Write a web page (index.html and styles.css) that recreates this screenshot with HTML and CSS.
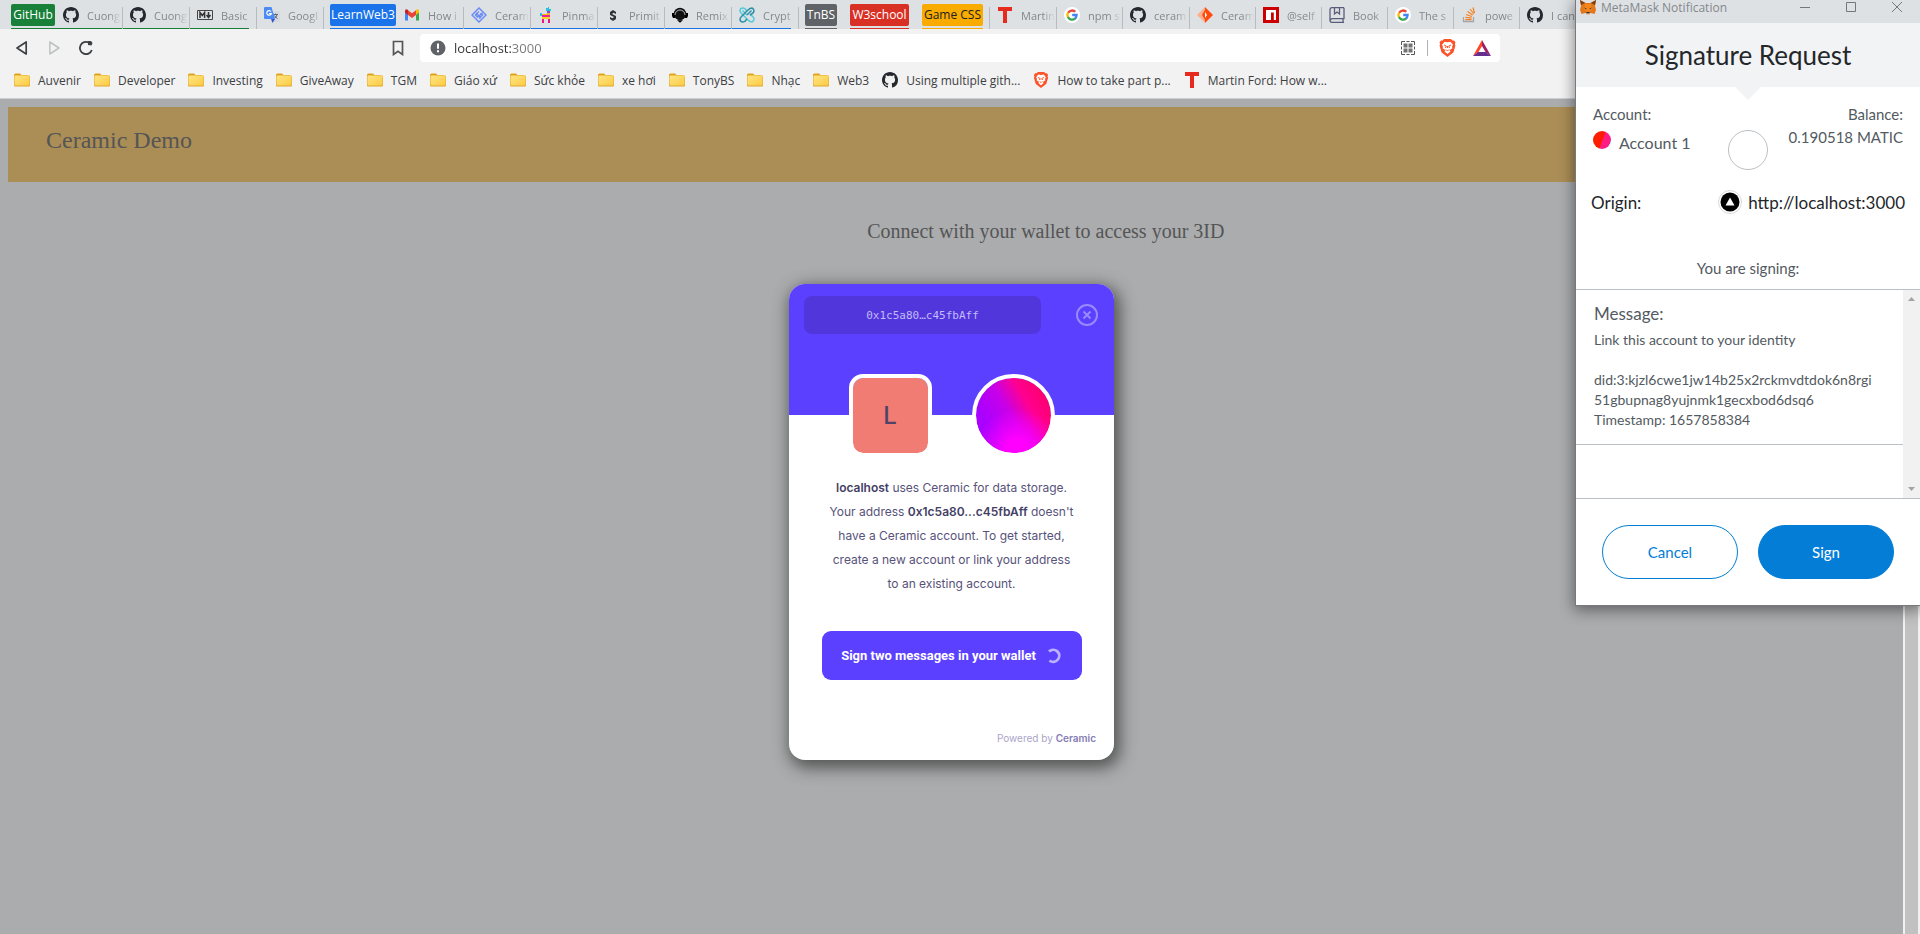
FILE: index.html
```html
<!DOCTYPE html>
<html lang="en">
<head>
<meta charset="utf-8">
<title>Ceramic Demo</title>
<link rel="stylesheet" href="styles.css">
</head>
<body>
<svg class="sprite" aria-hidden="true">
  <symbol id="github" viewBox="0 0 16 16"><path fill="#24292f" d="M8 0C3.58 0 0 3.58 0 8c0 3.54 2.29 6.53 5.47 7.59.4.07.55-.17.55-.38 0-.19-.01-.82-.01-1.49-2.01.37-2.53-.49-2.69-.94-.09-.23-.48-.94-.82-1.13-.28-.15-.68-.52-.01-.53.63-.01 1.08.58 1.23.82.72 1.21 1.87.87 2.33.66.07-.52.28-.87.51-1.07-1.78-.2-3.64-.89-3.64-3.95 0-.87.31-1.59.82-2.15-.08-.2-.36-1.02.08-2.12 0 0 .67-.21 2.2.82.64-.18 1.32-.27 2-.27s1.36.09 2 .27c1.53-1.04 2.2-.82 2.2-.82.44 1.1.16 1.92.08 2.12.51.56.82 1.27.82 2.15 0 3.07-1.87 3.75-3.65 3.95.29.25.54.73.54 1.48 0 1.07-.01 1.93-.01 2.2 0 .21.15.46.55.38A8.01 8.01 0 0 0 16 8c0-4.42-3.58-8-8-8z"/></symbol>
  <symbol id="folder" viewBox="0 0 16 16"><path fill="#dfa21b" d="M0 3q0-1.500 1.500-1.500H6l1.500 1.500H14V6H0z"/><rect x="0" y="3.500" width="16" height="11" rx="1" fill="#e0a72d"/><rect x=".5" y="3.500" width="15" height="10" rx="1" fill="url(#fold)"/></symbol>
  <linearGradient id="fold" x1="0" y1="0" x2="1" y2="1"><stop offset="0" stop-color="#ffe581"/><stop offset="1" stop-color="#fbcb45"/></linearGradient>
  <symbol id="google" viewBox="0 0 16 16"><circle cx="8" cy="8" r="8" fill="#fff"/><g fill="none" stroke-width="2.300"><path stroke="#ea4335" d="M4.100 5.800A4.600 4.600 0 0 1 11.300 4.800"/><path stroke="#fbbc05" d="M4 10.200A4.600 4.600 0 0 1 4.100 5.700"/><path stroke="#34a853" d="M3.900 10.100A4.600 4.600 0 0 0 11.200 11.400"/><path stroke="#4285f4" d="M8.200 8H12.600Q12.500 10.400 11 11.500"/></g></symbol>
  <symbol id="tee" viewBox="0 0 16 16"><path fill="#e62b1e" d="M1 0H15V4H10V16H6V4H1z"/></symbol>
  <symbol id="brave" viewBox="0 0 16 18"><path fill="#fb542b" d="M4.500 0h7L13 1.500l1.600-.1L16 3.500l-.6 1.600.5 1.600-2 6.800L8 18l-5.900-4.500-2-6.800.5-1.600L0 3.500l1.400-2.100L3 1.500z"/><path fill="#fff" d="M5 2.800 8 3.300l3-.5 2.500 3-1 1.900.4 1.500-2.900 2 1 1.300L8 15l-3-2.500 1-1.300-2.900-2 .4-1.500-1-1.900z"/><path fill="none" stroke="#fb542b" stroke-width="1" d="M4.500 6l2.300 1L6 9M11.500 6 9.200 7l.8 2M6.500 10.500 8 12l1.500-1.500M8 7v2"/></symbol>
</svg>

<div class="browser">
  <nav class="tabs" aria-label="Tabs">
    <div class="group group-green">
      <button class="chip">GitHub</button>
      <a class="tab" href="#"><svg><use href="#github"/></svg><span>Cuong</span></a>
      <a class="tab" href="#"><svg><use href="#github"/></svg><span>Cuong</span></a>
      <a class="tab" href="#"><svg viewBox="0 0 16 16"><path fill="none" stroke="#444" d="M.5 3.500h15v9H.5z"/><path fill="none" stroke="#333" stroke-width="1.500" d="M3 11V5.500l2.300 3 2.300-3V11M11.500 5v5M9.500 8l2 2.500 2-2.500"/></svg><span>Basic</span></a>
    </div>
    <a class="tab" href="#"><svg viewBox="0 0 16 16"><path fill="#d5d9de" d="M6 4h9q1 0 1 1v9q0 1-1 1H9z"/><path fill="none" stroke="#5f6b7a" d="M9 7.500h5M11.500 6.500v1M13 7.500q-.5 3-3 4M10.500 8.500q1 2 3 3"/><path fill="#3457c9" d="M7 12h4l-2.500 4z"/><path fill="#4b8bf5" d="M1 0h6.500L11 12H1q-1 0-1-1V1q0-1 1-1z"/><path fill="none" stroke="#fff" stroke-width="1.200" d="M7 4.600A2.300 2.300 0 1 0 7.300 6.500H5"/></svg><span>Googl</span></a>
    <div class="group group-blue">
      <button class="chip">LearnWeb3</button>
      <a class="tab" href="#"><svg viewBox="0 0 16 16"><path fill="#4285f4" d="M1 13.500h3V6L1 4z"/><path fill="#34a853" d="M12 13.500h3V4l-3 2z"/><path fill="#c5221f" d="M1 3.500q1-2 3-.5v5L1 5.500z"/><path fill="#ea4335" d="M4 3.200 8 6.200l4-3V8L8 11 4 8z"/><path fill="#fbbc04" d="M12 3q2-1.500 3 .5v2L12 8z"/></svg><span>How i</span></a>
      <a class="tab" href="#"><svg viewBox="0 0 16 16"><g fill="none" stroke="#6b8cf5" stroke-width="1.500"><path d="M8 1l7 7-7 7-7-7z"/><path d="M8 4.500 4.500 8l2 2 5-4M8 11.500 11.500 8l-2-2M5 6l5 5"/></g></svg><span>Ceram</span></a>
      <a class="tab" href="#"><svg viewBox="0 0 16 16"><path fill="#27c1e5" d="M8 1h2V0h1v2h2v2H8z"/><path fill="#8448c8" d="M9 4h3v2H9z"/><path fill="#f4b41c" d="M9 6h3v2H4V7h5z"/><path fill="#ec268f" d="M4 8h8v2H4z"/><path fill="#ffd42a" d="M4 10h8v2H4z"/><path fill="#27c1e5" d="M2 6h2v3H2z"/><path fill="#ed187b" d="M4 12h2v4H4zM10 12h2v4h-2z"/></svg><span>Pinma</span></a>
      <a class="tab" href="#"><svg viewBox="0 0 16 16"><path fill="#333" d="M5 5l3-2 3 2v2L8.500 5.800 7 7l4 2v3l-3 2-3-2v-2l2.500 1.200L9 10 5 8z"/></svg><span>Primit</span></a>
      <a class="tab" href="#"><svg viewBox="0 0 16 16"><circle cx="8" cy="7" r="6.200" fill="#111"/><path d="M0 6h3v5H1L0 9zM16 6h-3v5h2l1-2z" fill="#000"/><path fill="#dde1e4" d="M8 16 1.500 11.500h2L8 14.800l4.500-3.300h2z"/><path fill="#000" d="M5 13.200h6L8 15.700z"/><path fill="none" stroke="#dde1e4" stroke-width=".8" d="M3 8a5 5 0 1 1 10 0"/></svg><span>Remix</span></a>
      <a class="tab" href="#"><svg viewBox="0 0 16 16"><g fill="none" stroke-width="1.500"><path stroke="#55c9d9" d="M8 8 3.500 3.500M8 4Q6 1 4 1 1 1 1 4q0 1 2 3l6 6q2 2 4 2 2-1 2-3 0-2-4-4.500"/><path stroke="#2a8fa8" d="M8 8l4.500-4.500M8 12q-2 3-4 3-3 0-3-3 0-1 2-3l6-6q2-2 4-2 2 1 2 3 0 2-4 4"/></g></svg><span>Crypt</span></a>
    </div>
    <div class="group group-gray"><button class="chip">TnBS</button></div>
    <div class="group group-red"><button class="chip">W3school</button></div>
    <div class="group group-yellow"><button class="chip">Game CSS</button></div>
    <a class="tab tab-first" href="#"><svg><use href="#tee"/></svg><span>Martin</span></a>
    <a class="tab tab-slim" href="#"><svg><use href="#google"/></svg><span>npm s</span></a>
    <a class="tab" href="#"><svg><use href="#github"/></svg><span>ceram</span></a>
    <a class="tab tab-slim" href="#"><svg viewBox="0 0 16 16"><path fill="#ffad8c" d="M8 0v16L0 8z"/><path fill="#ff4a0e" d="M8 0l8 8-8 8z"/><path fill="#ff4a0e" d="M8 3v10L5 8z"/><path fill="#fff" d="M8 5l2 3-2 3z"/></svg><span>Ceram</span></a>
    <a class="tab tab-slim" href="#"><svg viewBox="0 0 16 16"><path fill="#c00" d="M0 0h16v16H0z"/><path fill="#fff" d="M3 3h10v10h-2.200V5.500H8V13H3z"/></svg><span>@self</span></a>
    <a class="tab tab-slim" href="#"><svg viewBox="0 0 16 16"><g fill="none" stroke="#5a5d7a" stroke-width="1.300"><path d="M15 .7H3Q1 .7 1 3v10q0 2.300 2 2.300h12M15 .7v11H3.500q-2 0-2 1.500M15 15.300h-1v-3.500M5.500 1v6L8 5l2.500 2V1"/></g></svg><span>Book</span></a>
    <a class="tab tab-slim" href="#"><svg><use href="#google"/></svg><span>The s</span></a>
    <a class="tab tab-slim" href="#"><svg viewBox="0 0 16 16"><path fill="none" stroke="#a1a5aa" stroke-width="1.300" d="M2.500 10v4.500h10V10"/><path fill="none" stroke="#f48024" stroke-width="1.200" d="M4.300 12.600h6.200M4.400 10.300l6.200.8M5 7.500l6 2M6.600 4.600l5.100 3.500M9 2l4 5M12 .5l1.500 5.500"/></svg><span>powe</span></a>
    <a class="tab" href="#"><svg><use href="#github"/></svg><span>I can</span></a>
  </nav>

  <div class="toolbar">
    <div class="nav-buttons">
      <button aria-label="Back"><svg viewBox="0 0 16 16"><path d="M12.200 2v12L3 8z" fill="none" stroke="#3c4043" stroke-width="1.700" stroke-linejoin="round"/></svg></button>
      <button aria-label="Forward"><svg viewBox="0 0 16 16"><path d="M3.800 2v12L13 8z" fill="none" stroke="#bfc1c3" stroke-width="1.500" stroke-linejoin="round"/></svg></button>
      <button aria-label="Reload"><svg viewBox="0 0 16 16"><path d="M13.800 10A6.100 6.100 0 1 1 11 2.700" fill="none" stroke="#3c4043" stroke-width="1.800"/><path d="M10 1h3l1.500 2-1 2.500L10 5z" fill="#3c4043"/></svg></button>
    </div>
    <button class="save" aria-label="Bookmark this tab"><svg viewBox="0 0 16 16"><path d="M3.500 1.500h9v13L8 11.300l-4.500 3.200z" fill="none" stroke="#555" stroke-width="1.700"/></svg></button>
    <div class="address">
      <svg viewBox="0 0 16 16"><circle cx="8" cy="8" r="7.500" fill="#5f6368"/><path d="M7 3.500h2v5.200H7zM7 10.300h2v2H7z" fill="#fff"/></svg>
      <input type="text" aria-label="Address" value="localhost:3000">
      <svg viewBox="0 0 16 16"><path fill="none" stroke="#555" d="M1.500 5V1.500H5M6.500 1.500h3M11 1.500h3.500V5M14.500 6.500v3M14.500 11v3.500H11M9.500 14.500h-3M5 14.500H1.500V11M1.500 9.500v-3"/><path fill="#707274" d="M3.500 3.500h4v4h-4zM8.500 3.500h4v4h-4zM3.500 8.500h4v4h-4zM8.500 8.500h4v4h-4z"/></svg>
      <i class="rule"></i>
      <svg class="shield"><use href="#brave"/></svg>
      <svg class="bat" viewBox="0 0 18 16"><path fill="#ff4724" d="M9 0v6L5.300 12.200 0 16z"/><path fill="#9e1f63" d="M9 0l9 16-5.300-3.800L9 6z"/><path fill="#662d91" d="M0 16l5.300-4h7.400L18 16z"/></svg>
    </div>
  </div>

  <nav class="bookmarks" aria-label="Bookmarks">
    <a href="#"><svg><use href="#folder"/></svg>Auvenir</a>
    <a href="#"><svg><use href="#folder"/></svg>Developer</a>
    <a href="#"><svg><use href="#folder"/></svg>Investing</a>
    <a href="#"><svg><use href="#folder"/></svg>GiveAway</a>
    <a href="#"><svg><use href="#folder"/></svg>TGM</a>
    <a href="#"><svg><use href="#folder"/></svg>Giáo xứ</a>
    <a href="#"><svg><use href="#folder"/></svg>Sức khỏe</a>
    <a href="#"><svg><use href="#folder"/></svg>xe hơi</a>
    <a href="#"><svg><use href="#folder"/></svg>TonyBS</a>
    <a href="#"><svg><use href="#folder"/></svg>Nhạc</a>
    <a href="#"><svg><use href="#folder"/></svg>Web3</a>
    <a href="#"><svg><use href="#github"/></svg>Using multiple gith...</a>
    <a href="#"><svg><use href="#brave"/></svg>How to take part p...</a>
    <a href="#"><svg><use href="#tee"/></svg>Martin Ford: How w...</a>
  </nav>

  <div class="viewport">
    <main class="page">
      <header class="site-header">Ceramic Demo</header>
      <p class="connect">Connect with your wallet to access your 3ID</p>
      <div class="overlay">
        <section class="modal" aria-label="Connect account">
          <div class="modal-top">
            <div class="wallet">0x1c5a80…c45fbAff</div>
            <button class="close" aria-label="Close"><svg viewBox="0 0 22 22"><g fill="none" stroke="#9a88ff" stroke-width="2"><circle cx="11" cy="11" r="10"/><path d="M7.500 7.500l7 7M14.500 7.500l-7 7"/></g></svg></button>
          </div>
          <div class="avatars">
            <div class="avatar avatar-app">L</div>
            <div class="avatar avatar-user"></div>
          </div>
          <p class="modal-text"><b>localhost</b> uses Ceramic for data storage.<br>Your address <b>0x1c5a80...c45fbAff</b> doesn't<br>have a Ceramic account. To get started,<br>create a new account or link your address<br>to an existing account.</p>
          <button class="submit">Sign two messages in your wallet
            <svg viewBox="0 0 16 16"><path d="M3 3.500A6 6 0 1 1 3.500 12.500" fill="none" stroke="#bdb0ff" stroke-width="2.800"/></svg>
          </button>
          <p class="powered">Powered by <b>Ceramic</b></p>
        </section>
      </div>
    </main>
    <div class="scrollbar"><div class="thumb"></div></div>
  </div>
</div>

<aside class="popup" aria-label="MetaMask Notification">
  <div class="titlebar">
    <svg class="fox" viewBox="0 0 16 16"><path fill="#e2761b" d="M0 1l6 3h4l6-3-1 6 1 4-1.500 4-4-1L9 15.500H7L5.500 14l-4 1L0 11l1-4z"/><path fill="#763d16" d="M0 1l5 3-4 2zM16 1l-5 3 4 2z"/><path fill="#f6851b" d="M5 5h6l1 6-4 2-4-2z"/><path fill="#233447" d="M4 8.500l2.500 1-.5 1zM12 8.500l-2.500 1 .5 1zM6.500 13h3v1.500h-3z"/><path fill="#d7c1b3" d="M6 14.500h4l-1 1.500H7z"/></svg>
    <span class="title">MetaMask Notification</span>
    <button aria-label="Minimize"><svg viewBox="0 0 12 12"><path d="M1 6.500h10"/></svg></button>
    <button aria-label="Maximize"><svg viewBox="0 0 12 12"><path d="M1.500 1.500h9v9h-9z"/></svg></button>
    <button aria-label="Close"><svg viewBox="0 0 12 12"><path d="M1 1l10 10M11 1 1 11"/></svg></button>
  </div>
  <h1>Signature Request</h1>
  <div class="pointer"></div>
  <div class="account-row">
    <div>
      <div class="label">Account:</div>
      <div class="account"><i class="jazzicon"></i>Account 1</div>
    </div>
    <div class="ring"></div>
    <div class="balance">
      <div class="label">Balance:</div>
      <div class="amount">0.190518 MATIC</div>
    </div>
  </div>
  <div class="origin-row"><span>Origin:</span><span class="origin"><svg viewBox="0 0 24 24"><circle cx="12" cy="12" r="11.500" fill="#fff" stroke="#d6d9dc"/><circle cx="12" cy="12" r="9.500" fill="#000"/><path fill="#fff" d="M12 7.500l4.500 8h-9z"/></svg>http://localhost:3000</span></div>
  <p class="signing">You are signing:</p>
  <div class="message-area">
    <div class="message-list">
      <div class="message">
        <h2>Message:</h2>
        <p>Link this account to your identity<br><br>did:3:kjzl6cwe1jw14b25x2rckmvdtdok6n8rgi<br>51gbupnag8yujnmk1gecxbod6dsq6<br>Timestamp: 1657858384</p>
      </div>
    </div>
    <div class="message-scroll"><i class="up"></i><i class="down"></i></div>
  </div>
  <div class="actions"><button class="cancel">Cancel</button><button class="sign">Sign</button></div>
</aside>
</body>
</html>
```
FILE: styles.css
```css
* { box-sizing: border-box; }
body { margin: 0; overflow: hidden; font-family: "Open Sans", "Noto Sans", sans-serif; }
button { border: 0; padding: 0; background: none; font: inherit; color: inherit; }
a { color: inherit; text-decoration: none; }
p, h1, h2 { margin: 0; font-weight: 400; }
svg { display: block; flex: none; width: 16px; height: 16px; }
.sprite { position: absolute; width: 0; height: 0; }

.browser { display: flex; flex-direction: column; height: 100vh; background: #f2f2f2; }

/* tab strip */
.tabs { display: flex; flex: none; height: 29px; padding-left: 11px; background: #dde1e4; font-size: 12px; overflow: hidden; }
.group { display: flex; flex: none; margin-left: 13px; --tone: #188038; background: linear-gradient(var(--tone), var(--tone)) no-repeat left bottom / 100% 1px; }
.group-green { margin-left: 0; background-size: calc(100% - 8px) 1px; }
.group-blue { --tone: #1a73e8; margin-left: 6px; background-size: calc(100% - 8px) 1px; }
.group-gray { --tone: #5f6368; margin-left: 6px; }
.group-red { --tone: #d93025; }
.group-yellow { --tone: #f9ab00; }
.chip { height: 22px; margin-top: 4px; border-radius: 2px; background: var(--tone); color: #fff; line-height: 22px; text-align: center; white-space: nowrap; }
.group-green .chip { width: 44px; margin-right: 1px; }
.group-blue .chip { width: 66px; margin-right: 1px; }
.group-gray .chip { width: 32px; }
.group-red .chip { width: 59px; }
.group-yellow .chip { width: 61px; color: #202124; }
.tab { position: relative; display: flex; flex: none; align-items: center; gap: 8px; width: 67px; padding: 1px 0 0 7px; color: #84878a; font-size: 11px; }
.tab-slim { width: 66px; }
.tab::after { content: ""; position: absolute; right: 0; top: 7px; bottom: 0; width: 1px; background: #b9bcbf; }
.tab-first { margin-left: 7px; }
.tab-first::before { content: ""; position: absolute; left: -1px; top: 7px; bottom: 0; width: 1px; background: #b9bcbf; }
.tab span { flex: 1; min-width: 0; white-space: nowrap; mask-image: linear-gradient(90deg, #000 60%, transparent 95%); }

/* toolbar */
.toolbar { display: flex; flex: none; align-items: center; height: 38px; }
.nav-buttons { display: flex; gap: 16px; padding-left: 14px; }
.save { margin: 0 14px 0 296px; }
.address { display: flex; align-items: center; flex: 0 0 1080px; height: 28px; padding: 0 9px 0 10px; border-radius: 4px; background: #fff; }
.address input { flex: 1; min-width: 0; margin-left: 8px; padding: 0; border: 0; outline: 0; font: 13px "Open Sans", sans-serif; background: linear-gradient(90deg, #333 57px, #777 57px); background-clip: text; color: transparent; }
.rule { width: 1px; height: 16px; margin: 0 11px; background: #aeb0b3; }
.address .shield { width: 17px; height: 18px; }
.address .bat { width: 18px; margin-left: 17px; }

.bookmarks { display: flex; flex: none; gap: 13px; height: 32px; padding: 0 14px 5px; align-items: center; border-bottom: 1px solid #cdd0d3; font-size: 12px; color: #3c4043; white-space: nowrap; }
.bookmarks a { display: flex; align-items: center; gap: 8px; }

/* page */
.viewport { display: flex; flex: 1; min-height: 0; }
.page { position: relative; flex: 1; padding: 8px; background: #abacae; font-family: "Liberation Serif", serif; color: #555; }
.site-header { height: 75px; padding: 19px 38px; background: #ab8e56; font-size: 24px; line-height: 28px; }
.connect { padding: 37px 0 0 10%; text-align: center; font-size: 20px; line-height: 24px; }
.scrollbar { display: flex; width: 17px; padding: 0 2px; background: #f1f1f1; }
.thumb { flex: 1; background: #c1c1c1; }

/* modal */
.overlay { position: absolute; inset: 0; display: flex; justify-content: center; align-items: flex-start; padding-top: 185px; }
.modal { width: 325px; padding-bottom: 14px; border-radius: 16px; background: #fff; box-shadow: 3px 5px 16px 3px rgba(50, 52, 48, .72); font-family: Inter, sans-serif; color: #57527a; overflow: hidden; }
.modal-top { display: flex; justify-content: space-between; align-items: flex-start; height: 131px; padding: 12px 16px 0 15px; background: #5c40ff; }
.wallet { width: 237px; height: 38px; border-radius: 8px; background: #5136dc; color: #c5bcf8; font: 11px/39px "DejaVu Sans Mono", monospace; text-align: center; }
.close { margin-top: 8px; }
.close svg { width: 22px; height: 22px; }
.avatars { display: flex; justify-content: center; gap: 40px; margin-top: -41px; }
.avatar { width: 83px; height: 83px; border: 4px solid #fff; border-radius: 14px; background: #f17c73 padding-box; color: #4f4468; font-size: 24px; font-weight: 500; line-height: 75px; text-align: center; }
.avatar-user { border-radius: 50%; background: radial-gradient(circle at 55% 95%, #f0f 0 12%, transparent 50%) padding-box, linear-gradient(60deg, #a0f 25%, #c800e8 48%, #ff0090 68%, #ff0068 90%) padding-box; }
.modal-text { margin-top: 19px; text-align: center; font-size: 12px; line-height: 24px; }
.modal-text b { font-weight: 600; color: #443f66; }
.submit { display: flex; align-items: center; justify-content: center; gap: 10px; width: 260px; height: 49px; margin: 35px auto 0; border-radius: 9px; background: #5c40ff; color: #fff; font: bold 13px Roboto, sans-serif; }
.powered { margin: 50px 18px 0; text-align: right; font-size: 10px; line-height: 16px; color: #aaa4c8; }
.powered b { font-weight: 600; color: #857db5; }

/* wallet window */
.popup { position: absolute; top: 0; right: 0; width: 344px; background: #fff; box-shadow: 0 0 0 1px #77797b, 0 3px 14px 2px rgba(0, 0, 0, .45); font-family: Lato, sans-serif; color: #535a61; }
.titlebar { display: flex; align-items: flex-start; height: 23px; padding-right: 17px; background: #dde1e4; font: 12px/16px "Open Sans", sans-serif; color: #85888b; }
.titlebar .title { flex: 1; }
.titlebar .fox { margin: -1px 5px 0 4px; }
.titlebar button { margin: 1px 0 0 34px; }
.titlebar button svg { width: 12px; height: 12px; fill: none; stroke: #777; }
.popup h1 { height: 64px; background: #f2f3f5; color: #24272a; font-size: 26px; line-height: 64px; text-align: center; }
.pointer { width: 26px; height: 13px; margin: 0 auto; background: #f2f3f5; clip-path: polygon(0 0, 100% 0, 50% 100%); }
.account-row { display: grid; grid-template-columns: 1fr 40px 1fr; height: 75px; padding: 4px 17px 0; }
.label { font-size: 15px; line-height: 20px; }
.account { display: flex; gap: 8px; margin-top: 6px; font-size: 16px; line-height: 26px; }
.jazzicon { width: 18px; height: 18px; margin-top: 1px; border-radius: 50%; background: linear-gradient(110deg, #fb1e00 52%, #ff1a84 53% 86%, #4c9ad8 87%); }
.ring { height: 40px; margin-top: 26px; border: 1px solid #bbc0c5; border-radius: 50%; }
.balance { text-align: right; white-space: nowrap; }
.amount { font-size: 15px; line-height: 26px; }
.origin-row { display: flex; justify-content: space-between; align-items: center; height: 54px; padding: 0 15px; color: #24272a; font-size: 17px; }
.origin { display: flex; align-items: center; gap: 6px; }
.origin svg { width: 24px; height: 24px; }
.signing { height: 61px; padding-top: 29px; font-size: 15px; line-height: 20px; text-align: center; border-bottom: 1px solid #bbc0c5; }
.message-area { display: flex; height: 209px; border-bottom: 1px solid #bbc0c5; }
.message-list { flex: 1; }
.message { height: 155px; padding: 13px 18px 0; border-bottom: 1px solid #bbc0c5; }
.message h2 { font-size: 17px; line-height: 22px; }
.message p { margin-top: 5px; font-size: 14px; line-height: 20px; }
.message-scroll { display: flex; flex-direction: column; justify-content: space-between; align-items: center; width: 17px; padding: 7px 0; background: #f1f1f1; }
.message-scroll i { width: 7px; height: 4px; background: #a3a3a3; clip-path: polygon(50% 0, 100% 100%, 0 100%); }
.message-scroll .down { clip-path: polygon(0 0, 100% 0, 50% 100%); }
.actions { display: flex; gap: 20px; padding: 26px; }
.actions button { flex: 1; height: 54px; border: 1px solid #037dd6; border-radius: 27px; color: #037dd6; font-size: 15px; }
.actions .sign { background: #037dd6; color: #fff; }
```
